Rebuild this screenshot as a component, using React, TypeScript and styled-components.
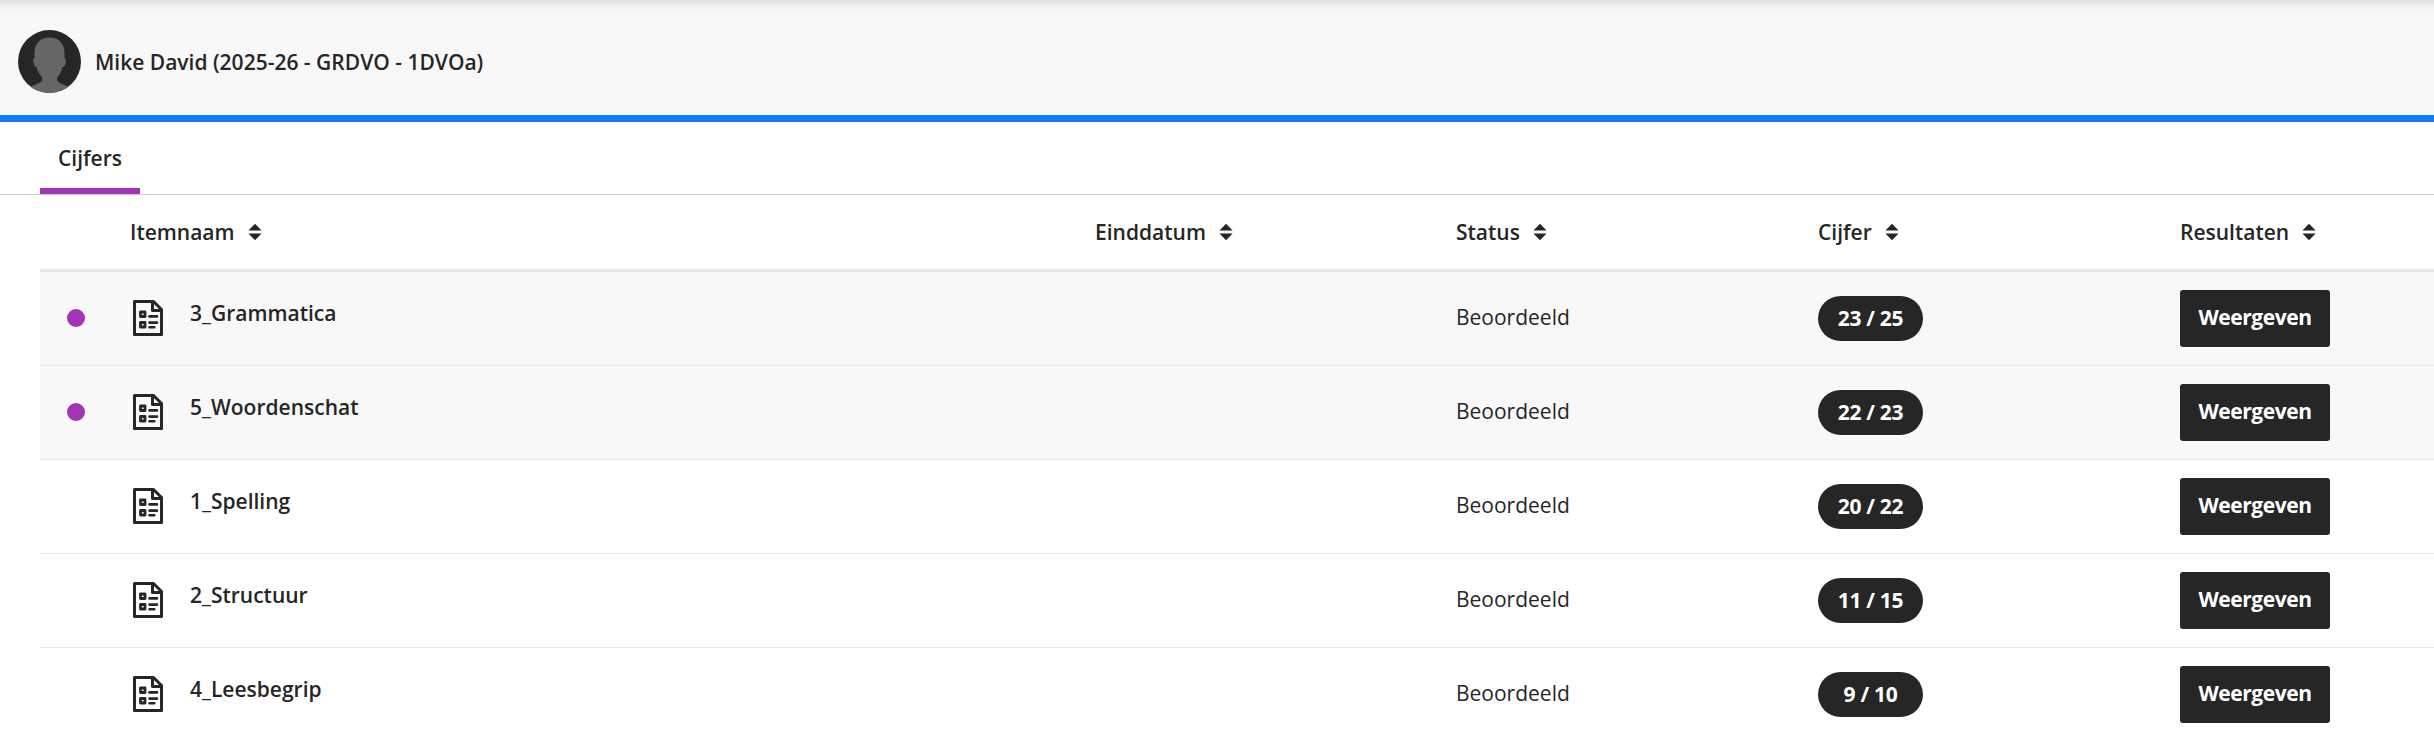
import React from "react";
import styled, { createGlobalStyle } from "styled-components";

const GlobalStyle = createGlobalStyle`
  * { box-sizing: border-box; }
  html, body { margin: 0; height: 738px; overflow: hidden; background: #fff; }
  body {
    font-family: "Open Sans", "Noto Sans", sans-serif;
    font-size: 21px;
    line-height: 30px;
    color: #262626;
  }
`;

const Page = styled.div`
  width: 100%;
  height: 738px;
  overflow: hidden;
`;

const Header = styled.header`
  display: flex;
  align-items: center;
  gap: 14px;
  height: 122px;
  padding: 0 18px;
  border-bottom: 7px solid #167aff;
  background: linear-gradient(#dedede, #ececec 4px, #f4f4f4 8px, #f8f8f8 13px);
`;

const Avatar = styled.svg`
  display: block;
  width: 63px;
  height: 63px;
  margin-top: 8px;
`;

const StudentName = styled.h1`
  margin: 9px 0 0;
  font-size: 21px;
  line-height: 30px;
  font-weight: 600;
`;

const TabBar = styled.nav`
  display: flex;
  height: 73px;
  padding-left: 40px;
  border-bottom: 1px solid #cdcdcd;
`;

const Tab = styled.div`
  width: 100px;
  padding-top: 21px;
  border-bottom: 6px solid #a234b5;
  text-align: center;
  font-weight: 600;
`;

const Table = styled.div`
  margin-left: 40px;
`;

const columns = "90px 965px 361px 362px 362px 1fr";

const HeadRow = styled.div`
  display: grid;
  grid-template-columns: ${columns};
  align-items: center;
  height: 77px;
  border-bottom: 3px solid #e6e6e6;
`;

const HeadCell = styled.div`
  display: flex;
  align-items: center;
  gap: 13px;
  font-weight: 600;
`;

const Row = styled.div<{ $unread: boolean }>`
  display: grid;
  grid-template-columns: ${columns};
  align-items: center;
  height: 94px;
  border-bottom: 1px solid #e6e6e6;
  background: ${(p) => (p.$unread ? "#f8f8f8" : "#fff")};
`;

const Dot = styled.span`
  width: 18px;
  height: 18px;
  margin: 0 0 1px 27px;
  border-radius: 50%;
  background: #a234b5;
`;

const Item = styled.div`
  display: flex;
  align-items: center;
  gap: 27px;
  margin-bottom: 1px;
  padding-left: 3px;
`;

const ItemName = styled.span`
  margin-bottom: 10px;
  font-weight: 600;
`;

const Status = styled.span`
  margin-bottom: 3px;
`;

const Pill = styled.span`
  display: flex;
  align-items: center;
  justify-content: center;
  width: 105px;
  height: 45px;
  padding-bottom: 1px;
  border-radius: 23px;
  background: #262626;
  color: #fff;
  font-weight: 700;
  letter-spacing: -0.3px;
`;

const ViewButton = styled.button`
  width: 150px;
  height: 57px;
  padding: 0 0 3px;
  border: 0;
  border-radius: 3px;
  background: #262626;
  color: #fff;
  font: inherit;
  font-weight: 700;
  letter-spacing: -0.45px;
`;

const SortIcon = () => (
  <svg width="14" height="18" viewBox="0 0 14 18" fill="#262626">
    <path d="M7 0.8 13.6 7.4H0.4ZM0.4 10.6H13.6L7 17.2Z" />
  </svg>
);

const TestIcon = () => (
  <svg width="30" height="36" viewBox="0 0 30 36" fill="none" stroke="#262626" strokeWidth="3" strokeLinejoin="round">
    <path d="M1.5 1.5H20.5L28.5 9.5V34.5H1.5Z" />
    <path d="M19.5 1.5V10.5H28.5" />
    <path d="M7.5 12H12V16.5H7.5ZM7.5 22.5H12V27H7.5Z" strokeWidth="2.8" />
    <path d="M16.5 16.4H24M16.5 22.6H24M16.5 27.2H21.3" strokeWidth="2.6" strokeLinecap="round" />
  </svg>
);

const AvatarImage = () => (
  <Avatar viewBox="0 0 63 63">
    <defs>
      <clipPath id="round">
        <circle cx="31.5" cy="31.5" r="31.5" />
      </clipPath>
    </defs>
    <g clipPath="url(#round)">
      <rect width="63" height="63" fill="#262626" />
      <path
        fill="#666"
        d="M31.5 7.5C40.5 7.5 46.5 13.5 46.5 22.5V28C48.3 28.5 48 31 47.3 34C46.8 36.5 45.5 37.2 44.5 37C43.7 41.5 42 44 39.5 47C38 49.5 39.5 52 43 53.5L51 57L55 64H8L12 57L20 53.5C24 52 25.5 49.5 23.8 47C21 44 19.5 41.5 18.7 37C17.5 37.2 16.3 36 15.7 33.5C15 30.5 14.7 28.5 16.5 28V22.5C16.5 13.5 22.5 7.5 31.5 7.5Z"
      />
    </g>
  </Avatar>
);

const headings = ["Itemnaam", "Einddatum", "Status", "Cijfer", "Resultaten"];

const items = [
  { name: "3_Grammatica", grade: "23 / 25", unread: true },
  { name: "5_Woordenschat", grade: "22 / 23", unread: true },
  { name: "1_Spelling", grade: "20 / 22", unread: false },
  { name: "2_Structuur", grade: "11 / 15", unread: false },
  { name: "4_Leesbegrip", grade: "9 / 10", unread: false },
];

export default function App() {
  return (
    <Page>
      <GlobalStyle />
      <Header>
        <AvatarImage />
        <StudentName>Mike David (2025-26 - GRDVO - 1DVOa)</StudentName>
      </Header>
      <TabBar>
        <Tab>Cijfers</Tab>
      </TabBar>
      <Table>
        <HeadRow>
          <span />
          {headings.map((h) => (
            <HeadCell key={h}>
              {h}
              <SortIcon />
            </HeadCell>
          ))}
        </HeadRow>
        {items.map((item) => (
          <Row key={item.name} $unread={item.unread}>
            {item.unread ? <Dot /> : <span />}
            <Item>
              <TestIcon />
              <ItemName>{item.name}</ItemName>
            </Item>
            <span />
            <Status>Beoordeeld</Status>
            <Pill>{item.grade}</Pill>
            <ViewButton>Weergeven</ViewButton>
          </Row>
        ))}
      </Table>
    </Page>
  );
}
